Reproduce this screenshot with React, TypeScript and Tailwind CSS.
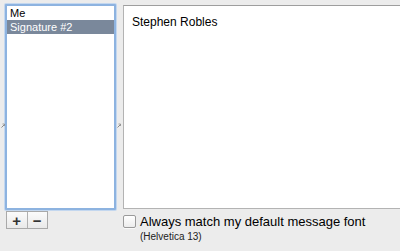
const font = "font-['Liberation_Sans','Helvetica',Arial,sans-serif]";

const Grip = ({ className }: { className: string }) => (
  <svg className={className} width="4" height="5" viewBox="0 0 4 5">
    <path d="M0.5 4.5 L3.5 1.5" stroke="#8a8a8a" strokeWidth="1" />
    <path d="M1.5 1 L3.5 1 L3.5 3" stroke="#8a8a8a" strokeWidth="0.8" fill="none" />
  </svg>
);

const SignatureList = () => (
  <div className="flex flex-col">
    <div className="relative w-[111px] h-[206px] rounded-[1px] border-2 border-[#8db3e0] shadow-[0_0_0_1px_#c3d7ef] bg-white">
      <div className="h-[14px] pl-[3px] pt-[1px] text-[11px] leading-[13px] text-black">Me</div>
      <div className="h-[14px] pl-[3px] pt-[1px] text-[11px] leading-[13px] text-white bg-[#7a889b]">Signature #2</div>
      <Grip className="absolute left-[-6px] top-[117px]" />
      <Grip className="absolute right-[-7px] top-[117px]" />
    </div>
    <div className="flex mt-[1px] ml-[1px] h-[18px] w-[42px] border border-[#a9a9a9] bg-gradient-to-b from-[#fbfbfb] to-[#e9e9e9]">
      <div className="flex-1 flex items-center justify-center border-r border-[#b0b0b0] text-[15px] font-bold leading-none text-[#333]">+</div>
      <div className="flex-1 flex items-center justify-center text-[15px] font-bold leading-none text-[#333]">−</div>
    </div>
  </div>
);

export default function App() {
  return (
    <div className={`w-[400px] h-[251px] overflow-hidden bg-[#ececec] flex pl-[5px] pt-[4px] ${font}`}>
      <SignatureList />
      <div className="flex-1 flex flex-col ml-[7px] pt-[1px]">
        <div className="h-[204px] bg-white border-l border-t border-b border-[#b3b3b3] border-t-[#9e9e9e] pl-[8px] pt-[9px] text-[12px] leading-[14px] text-black">
          Stephen Robles
        </div>
        <div className="flex mt-[5px]">
          <div className="mt-[1px] w-[13px] h-[13px] rounded-[2px] border border-[#9a9a9a] bg-gradient-to-b from-[#ffffff] to-[#ececec] shadow-[0_1px_0_rgba(255,255,255,0.7)]" />
          <div className="ml-[4px] flex flex-col">
            <div className="text-[13px] leading-[15px] text-black">Always match my default message font</div>
            <div className="text-[10px] leading-[12px] mt-[2px] text-[#222]">(Helvetica 13)</div>
          </div>
        </div>
      </div>
    </div>
  );
}
